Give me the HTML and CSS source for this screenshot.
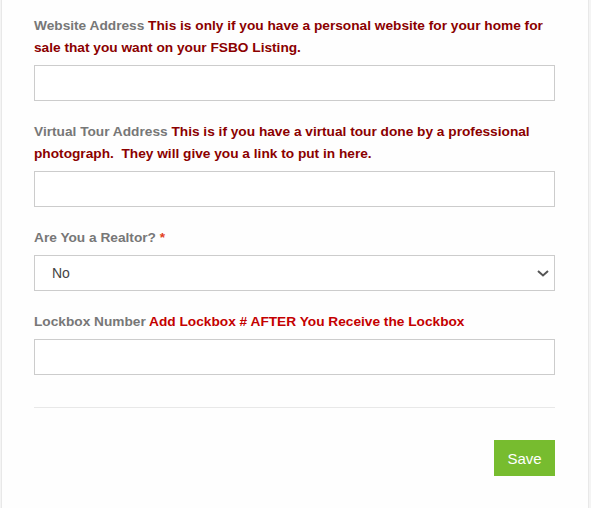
FILE: index.html
```html
<!DOCTYPE html>
<html>
<head>
<meta charset="utf-8">
<link rel="stylesheet" href="styles.css">
</head>
<body>
<div class="card">
  <form class="form">
    <div class="fields">
      <div class="field">
        <label class="label">Website Address <span class="note">This is only if you have a personal website for your home for sale that you want on your FSBO Listing.</span></label>
        <input class="input" type="text">
      </div>
      <div class="field">
        <label class="label">Virtual Tour Address <span class="note">This is if you have a virtual tour done by a professional photograph.&nbsp; They will give you a link to put in here.</span></label>
        <input class="input" type="text">
      </div>
      <div class="field">
        <label class="label">Are You a Realtor? <span class="req">*</span></label>
        <div class="select">
          <span class="select-value">No</span>
          <svg class="chevron" width="12" height="7" viewBox="0 0 12 7"><path d="M1 1 L6 5.5 L11 1" fill="none" stroke="#555" stroke-width="2"/></svg>
        </div>
      </div>
      <div class="field">
        <label class="label">Lockbox Number <span class="note-bright">Add Lockbox # AFTER You Receive the Lockbox</span></label>
        <input class="input" type="text">
      </div>
    </div>
    <div class="divider"></div>
    <div class="actions">
      <button class="save" type="button">Save</button>
    </div>
  </form>
</div>
</body>
</html>
```
FILE: styles.css
```css
html, body {
  margin: 0;
  padding: 0;
  background: #f4f4f4;
  font-family: "Liberation Sans", Arial, sans-serif;
}
.card {
  margin-left: 1px;
  width: 588px;
  min-height: 508px;
  box-sizing: border-box;
  background: #fefefe;
  border-left: 1px solid #e8e8e8;
  border-right: 1px solid #e8e8e8;
  padding: 15px 33px 0 32px;
}
.form {
  display: flex;
  flex-direction: column;
}
.fields {
  display: flex;
  flex-direction: column;
  gap: 20px;
}
.field {
  display: flex;
  flex-direction: column;
}
.label {
  font-size: 13.7px;
  font-weight: bold;
  line-height: 22px;
  color: #777;
  margin-bottom: 6px;
}
.note {
  color: #8b0000;
}
.note-bright {
  color: #c40000;
}
.req {
  color: #e2401c;
}
.input {
  height: 36px;
  box-sizing: border-box;
  border: 1px solid #cccccc;
  background: #fff;
  margin: 0;
  width: 100%;
}
.select {
  height: 36px;
  box-sizing: border-box;
  border: 1px solid #cccccc;
  background: #fff;
  display: flex;
  align-items: center;
  justify-content: space-between;
  padding: 0 5px 0 17px;
  font-size: 14px;
  color: #444;
}
.chevron {
  display: block;
}
.divider {
  margin-top: 32px;
  height: 1px;
  background: #e8e8e8;
}
.actions {
  display: flex;
  justify-content: flex-end;
  margin-top: 32px;
}
.save {
  width: 61px;
  height: 36px;
  border: none;
  background: #77bc2f;
  color: #fff;
  font-family: "Liberation Sans", Arial, sans-serif;
  font-size: 15px;
  padding: 0;
}
```
